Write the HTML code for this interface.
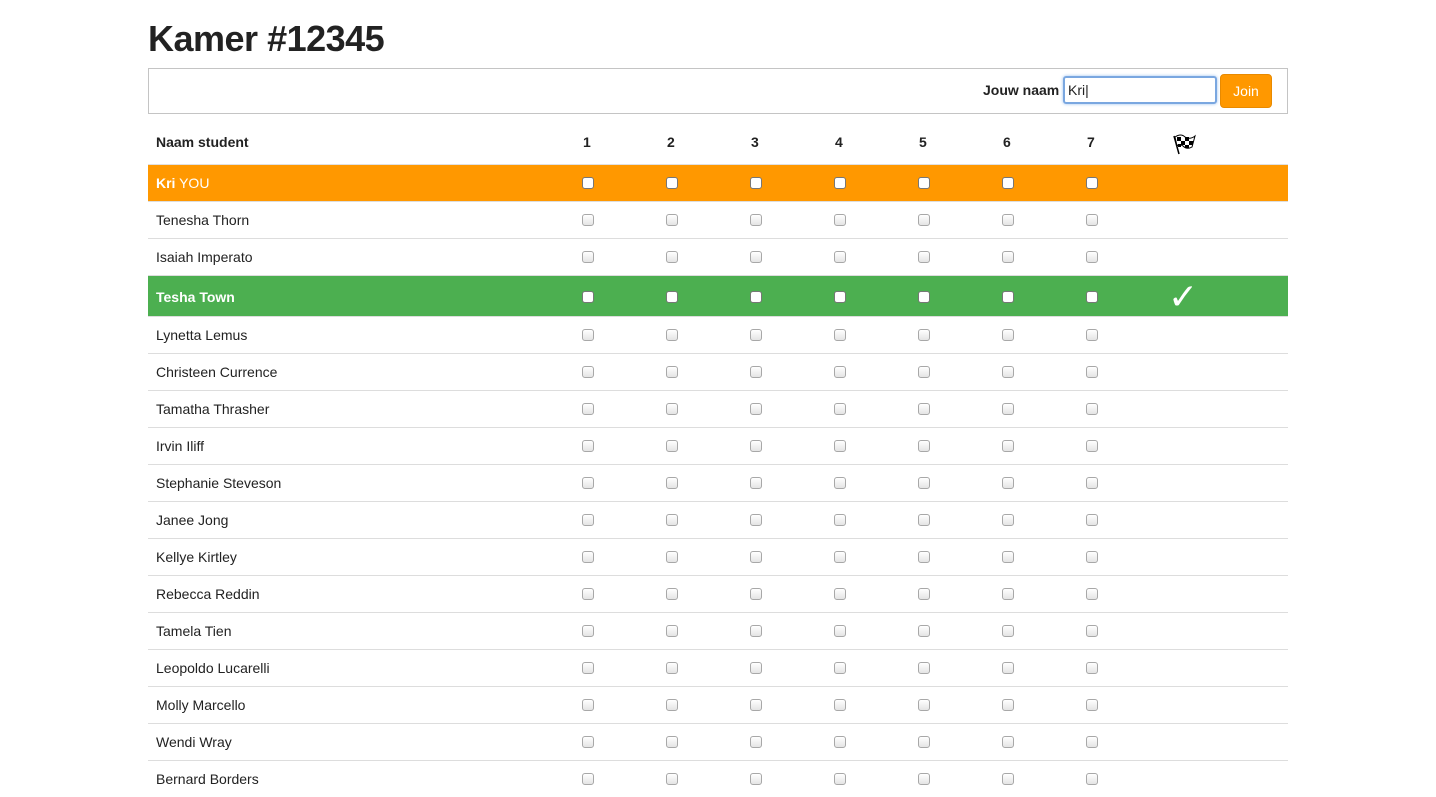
<!DOCTYPE html>
<html><head><meta charset="utf-8"><style>
*{box-sizing:border-box;margin:0;padding:0}
body{width:1436px;height:780px;overflow:hidden;background:#fff;font-family:"Liberation Sans",Arial,sans-serif;color:#222;position:relative}
h1{position:absolute;left:148px;top:18px;font-size:36px;font-weight:bold;letter-spacing:-0.5px;color:#222}
.box{position:absolute;left:148px;top:68px;width:1140px;height:46px;border:1px solid #c4c4c4}
.lbl{position:absolute;left:983px;top:82px;font-size:14px;font-weight:bold}
.inp{position:absolute;left:1063px;top:76px;width:154px;height:28px;border:2px solid #7aa7e0;border-radius:3px;box-shadow:0 0 3px #9bc0f0;font-size:14px;padding:5px 3px;line-height:14px}
.btn{position:absolute;left:1220px;top:74px;width:52px;height:34px;background:#ff9800;border:1px solid #e88a00;border-radius:4px;color:#fff;font-size:14px;text-align:center;line-height:32px}
.hdr{position:absolute;left:148px;top:114px;width:1140px;height:50px;font-size:14px;font-weight:bold}
.hdr span{position:absolute;top:20px}
.row{position:absolute;left:148px;width:1140px;height:37px;border-top:1px solid #ddd;font-size:14px}
.row .n{position:absolute;left:8px;top:50%;transform:translateY(-50%)}
.cb{position:absolute;top:50%;margin-top:-6px;width:12px;height:12px;border:1px solid #a8a8a8;border-radius:3px;background:linear-gradient(#fff,#e4e4e4)}
.or{background:#ff9800;color:#fff;border-top:1px solid #e0e0e0}
.gr{background:#4caf50;color:#fff;font-weight:bold;height:42px}
.or .cb,.gr .cb{border-color:#777;background:#fff}
</style></head><body>
<h1>Kamer #12345</h1>
<div class="box"></div>
<div class="lbl">Jouw naam</div>
<div class="inp">Kri|</div>
<div class="btn">Join</div>
<div class="hdr"><span style="left:8px">Naam student</span>
<span style="left:435px">1</span><span style="left:519px">2</span><span style="left:603px">3</span><span style="left:687px">4</span><span style="left:771px">5</span><span style="left:855px">6</span><span style="left:939px">7</span>
<span style="left:1023px;top:18px"><svg width="26" height="24" viewBox="0 0 26 24"><path d="M3 4 L8 22" stroke="#000" stroke-width="1.5"/><path d="M4 5 Q10 1 14 5 Q19 8 24 4 L21 15 Q16 18 12 14 Q8 11 6 14 Z" fill="#fff" stroke="#000"/><path d="M6 5h4v4h-4zM14 5h4v4h-4zM10 9h4v4h-4zM18 9h4v4h-4zM7 12h3v3h-3zM14 13h4v3h-4z" fill="#000"/></svg></span></div>
<div id="rows"></div>
<script>
var cols=[588,672,756,840,924,1008,1092];
var rows=[["<b>Kri</b> YOU",164,"or"],["Tenesha Thorn",201],["Isaiah Imperato",238],["Tesha Town",275,"gr"]];
var names=["Lynetta Lemus","Christeen Currence","Tamatha Thrasher","Irvin Iliff","Stephanie Steveson","Janee Jong","Kellye Kirtley","Rebecca Reddin","Tamela Tien","Leopoldo Lucarelli","Molly Marcello","Wendi Wray","Bernard Borders"];
names.forEach(function(n,i){rows.push([n,316+37*i])});
var h="";
rows.forEach(function(r){
h+='<div class="row '+(r[2]||'')+'" style="top:'+r[1]+'px"><span class="n">'+r[0]+'</span>';
cols.forEach(function(c){h+='<span class="cb" style="left:'+(c-148-6)+'px"></span>'});
if(r[2]=="gr")h+='<span style="position:absolute;left:1020px;top:0px;font-size:36px;color:#fff;font-weight:normal">&#10003;</span>';
h+='</div>';});
document.getElementById("rows").innerHTML=h;
</script>
</body></html>
